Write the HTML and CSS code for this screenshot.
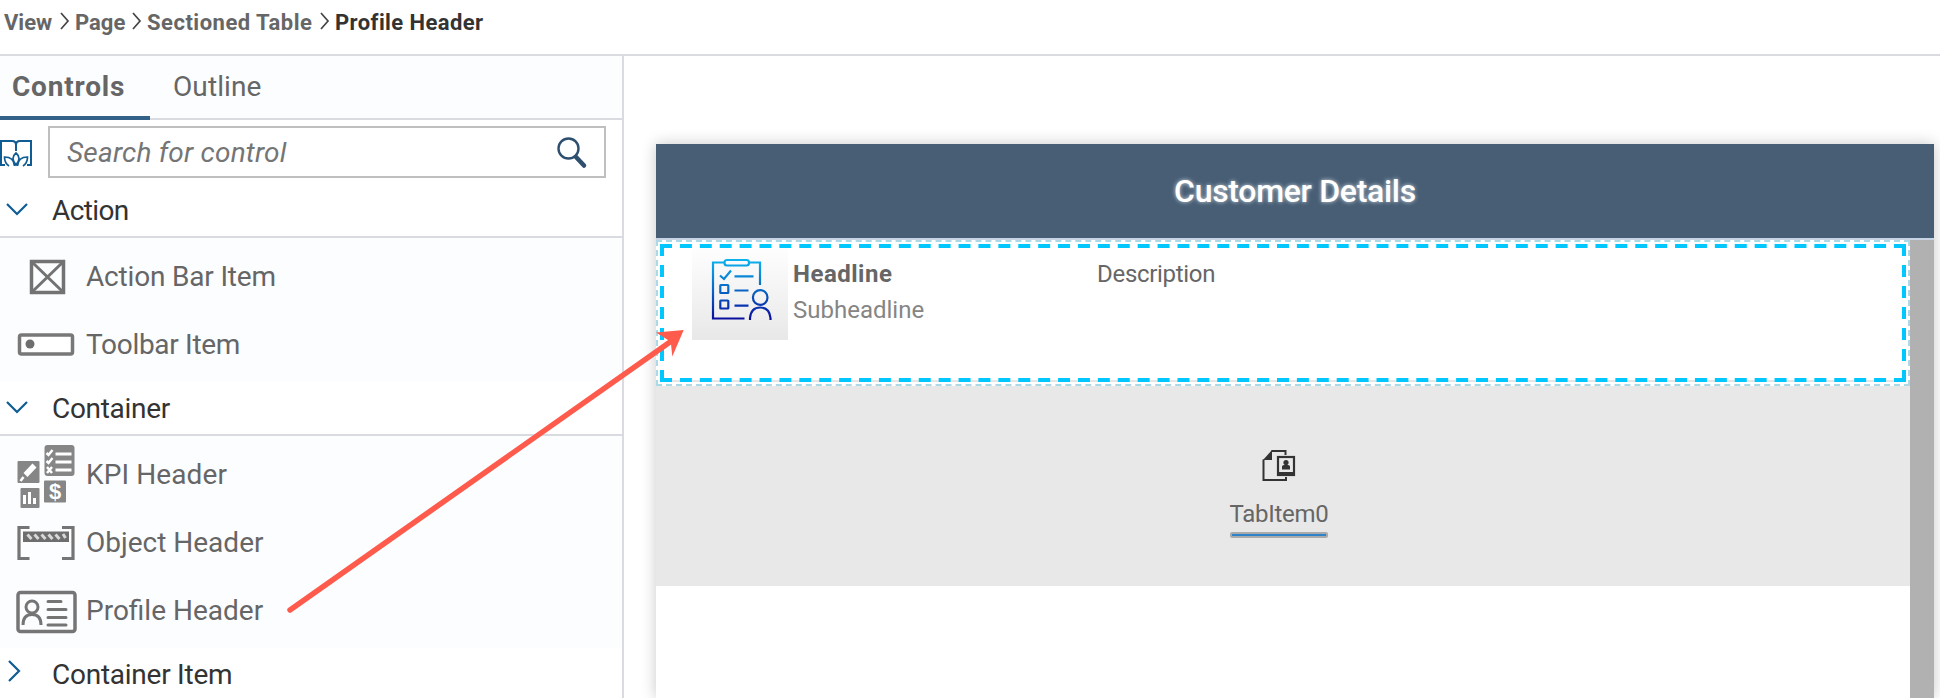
FILE: index.html
```html
<!DOCTYPE html>
<html lang="en">
<head>
<meta charset="utf-8">
<title>Page Designer</title>
<link rel="stylesheet" href="styles.css">
</head>
<body>
<nav class="crumbs">
  <span class="crumb c-view">View</span>
  <svg class="sep" width="12" height="18" viewBox="0 0 12 18"><path d="M2 1l7 8-7 8"/></svg>
  <span class="crumb c-page">Page</span>
  <svg class="sep" width="12" height="18" viewBox="0 0 12 18"><path d="M2 1l7 8-7 8"/></svg>
  <span class="crumb c-table">Sectioned Table</span>
  <svg class="sep" width="12" height="18" viewBox="0 0 12 18"><path d="M2 1l7 8-7 8"/></svg>
  <span class="crumb c-current">Profile Header</span>
</nav>
<main class="work">
  <aside class="side">
    <div class="tabs">
      <div class="tab active"><span>Controls</span></div>
      <div class="tab plain"><span>Outline</span></div>
    </div>
    <div class="search-row">
      <svg class="book" width="32" height="32" viewBox="0 0 32 32"><path d="M5 25H1V1h11q4 0 4 4q0-4 4-4h11v24h-4M16 5v6"/><path class="petal" d="M16 25Q10 18 16 13Q22 18 16 25zM14.500 26Q14 17 4.500 17Q4.500 23 9 26M17.500 26Q18 17 27.500 17Q27.500 23 23 26"/></svg>
      <div class="search">
        <span>Search for control</span>
        <svg width="32" height="36" viewBox="0 0 32 36"><circle cx="12.500" cy="13.500" r="10"/><path class="handle" d="M20 22l8 8.500"/></svg>
      </div>
    </div>
    <div class="section first"><svg width="22" height="14" viewBox="0 0 22 14"><path d="M1 2l10 10L21 2"/></svg><span class="s-action">Action</span></div>
    <div class="items">
      <div class="item">
        <svg width="64" height="68" viewBox="0 0 64 68"><g fill="none" stroke="#737373"><path stroke-width="3.500" d="M15.500 23.500h32v31h-32z"/><path stroke-width="3" d="M17 25l29 28M46 25L17 53"/></g></svg>
        <span class="t-abi">Action Bar Item</span>
      </div>
      <div class="item">
        <svg width="64" height="68" viewBox="0 0 64 68"><rect x="3.500" y="29" width="53" height="19" rx="2" fill="#fff" stroke="#787878" stroke-width="3.500"/><circle cx="14" cy="38" r="4.500" fill="#6e6e6e"/></svg>
        <span class="t-tbi">Toolbar Item</span>
      </div>
    </div>
    <div class="section second"><svg width="22" height="14" viewBox="0 0 22 14"><path d="M1 2l10 10L21 2"/></svg><span class="s-container">Container</span></div>
    <div class="items">
      <div class="item">
        <svg width="64" height="68" viewBox="0 0 64 68"><g transform="translate(-.5 1)"><g fill="#868686"><rect x="2" y="24" width="22" height="22" rx="1"/><rect x="29" y="8" width="30" height="31" rx="3"/><rect x="5" y="51" width="19" height="20" rx="1"/><rect x="28.500" y="43.500" width="22" height="22" rx="1"/></g><g fill="none" stroke="#fff"><path stroke-width="5.500" d="M19 28.500L10 38"/><path stroke-width="2.500" d="M8 40l-3 4M31 16l2 2 4-5M31 24l2 2 4-5M31.500 30l5 6M36.500 30l-5 6"/><path stroke-width="3" d="M40 17h16M40 25h16M40 33h16M9 58v9M14 55v12M19 61v6"/></g><text class="dollar" x="39.500" y="62">$</text></g></svg>
        <span class="t-kpi">KPI Header</span>
      </div>
      <div class="item">
        <svg width="64" height="68" viewBox="0 0 64 68"><path fill="none" stroke="#757575" stroke-width="3.200" d="M13.500 23.500H3v31h10.500M46 23.500h11v31H46"/><rect x="7" y="27.500" width="46" height="10.500" fill="#6e6e6e"/><path stroke="#d8d8d8" stroke-width="3" d="M11.500 30.500l4 4.500M18.500 30.500l4 4.500M25.500 30.500l4 4.500M32.500 30.500l4 4.500M39.500 30.500l4 4.500M47 30l2.500 4"/></svg>
        <span class="t-oh">Object Header</span>
      </div>
      <div class="item">
        <svg width="64" height="68" viewBox="0 0 64 68"><g fill="none" stroke="#757575" stroke-width="3"><rect x="2" y="20.500" width="57" height="39" rx="2.500" stroke-width="3.500"/><circle cx="16" cy="35" r="6"/><path d="M7 53q0-10.500 9-10.500t9 10.500"/><path stroke-linecap="round" d="M32 29.500h13M32 37.500h18M32 45.500h18M32 53h18"/></g></svg>
        <span class="t-ph">Profile Header</span>
      </div>
    </div>
    <div class="section third"><svg width="14" height="22" viewBox="0 0 14 22"><path d="M2 1l10 10L2 21"/></svg><span class="s-ci">Container Item</span></div>
  </aside>
  <section class="stage">
    <div class="device">
      <header class="bar"><span>Customer Details</span></header>
      <div class="body">
        <div class="content">
          <div class="profile">
            <svg class="frame" width="1246" height="138" viewBox="0 0 1246 138"><g fill="none" stroke="#00c8ff" stroke-width="4"><path stroke-dasharray="12 7.903" d="M0 2h1246M0 136h1246"/><path stroke-dasharray="12 9" d="M2 0v138M1244 0v138"/></g></svg>
            <div class="picture">
              <svg width="96" height="96" viewBox="0 0 96 96"><defs><linearGradient id="ink" gradientUnits="userSpaceOnUse" x1="0" y1="15" x2="0" y2="76"><stop offset="0" stop-color="#0cb4ee"/><stop offset=".5" stop-color="#0867c6"/><stop offset="1" stop-color="#0a0a9c"/></linearGradient></defs><g fill="none" stroke="url(#ink)" stroke-width="2.200"><path d="M32 18.500H21V74.500h31.500M57 18.500h11V41"/><rect x="32.500" y="16" width="24.500" height="5.500" rx="2.500"/><path d="M28 31.500l4 3.500 7-8.500M42.500 32.300h19M42.500 46.500h14M42.500 61.600h14"/><rect x="28.300" y="41" width="8" height="8" rx=".5"/><rect x="28.300" y="56.500" width="8" height="8" rx=".5"/><circle cx="68.200" cy="53.500" r="7.300"/><path d="M58 76v-2q1-10.500 10.200-10.500T78.500 74v2"/></g></svg>
            </div>
            <div class="names"><b>Headline</b><span>Subheadline</span></div>
            <div class="desc">Description</div>
          </div>
          <div class="tabstrip">
            <svg width="34" height="34" viewBox="0 0 34 34"><path d="M1.500 10.500V31H24v-3M9.500 2h14v4" fill="none" stroke="#333" stroke-width="2"/><path fill="#333" d="M1 11L10 1v10z"/><rect x="16" y="8" width="16" height="18" fill="#e8e8e8" stroke="#333" stroke-width="2.200"/><path fill="#333" d="M15 23h18v4H15zM20 20.500v-3q0-1.500 2-1.500h4q2 0 2 1.500v3z"/><circle cx="24" cy="13.500" r="2.600" fill="#333"/></svg>
            <span class="tabname">TabItem0</span>
            <i class="marker"></i>
          </div>
        </div>
        <div class="scroll"></div>
      </div>
    </div>
  </section>
</main>
<svg class="arrow" width="410" height="300" viewBox="0 0 410 300"><path d="M10 290L390 22" fill="none" stroke="#ff5b4d" stroke-width="5.500" stroke-linecap="round"/><path d="M403.700 10L392.300 36.500L391 24L388 20L376 12.500z" fill="#ff5b4d"/></svg>
</body>
</html>
```
FILE: styles.css
```css
* { box-sizing: border-box; }
body { margin: 0; width: 1940px; height: 698px; overflow: hidden; background: #fff; font-family: Roboto, "Noto Sans", sans-serif; font-size: 28px; color: #666; position: relative; }
svg { display: block; flex: none; overflow: visible; }
span, b { white-space: nowrap; }

.crumbs { display: flex; height: 56px; padding: 9px 0 0 4px; border-bottom: 2px solid #d9dbe0; font-size: 22px; font-weight: 700; line-height: 28px; }
.crumb { flex: none; }
.c-view { width: 55px; }
.c-page { width: 56px; }
.c-table { width: 172px; letter-spacing: .5px; }
.c-current { color: #333; letter-spacing: .42px; }
.sep { margin: 3px 4px 0 0; fill: none; stroke: #444; stroke-width: 1.7; }

.work { display: flex; height: 642px; overflow: hidden; }
.side { width: 624px; flex: none; border-right: 2px solid #d9dbe0; background: #fff; }
.tabs { display: flex; height: 64px; border-bottom: 2px solid #d9dbe0; background: #fcfdff; line-height: 62px; }
.tab { height: 64px; }
.active { width: 150px; padding-left: 12px; border-bottom: 4px solid #346187; font-weight: 700; letter-spacing: .8px; }
.plain { padding-left: 23px; letter-spacing: .1px; }

.search-row { display: flex; padding-top: 6px; height: 72px; }
.book { margin: 14px 16px 0 0; fill: none; stroke: #0f5c94; stroke-width: 2; }
.petal { stroke-width: 1.7; }
.search { display: flex; justify-content: space-between; width: 558px; height: 52px; padding: 0 16px 0 17px; border: 2px solid #bfbfbf; color: #757575; font-style: italic; line-height: 50px; letter-spacing: .2px; }
.search svg { margin-top: 7px; fill: none; stroke: #2f4f6f; stroke-width: 2.4; }
.search .handle { stroke-width: 4.500; stroke-linecap: round; }

.section { display: flex; align-items: flex-start; height: 46px; padding-left: 6px; border-bottom: 2px solid #d9dbe0; color: #333; line-height: 38px; }
.section svg { margin: 10px 24px 0 0; fill: none; stroke: #0f5c94; stroke-width: 2.2; }
.s-action { letter-spacing: -.6px; }
.s-container { letter-spacing: -.3px; }
.s-ci { letter-spacing: -.25px; }
.second { height: 54px; padding-top: 8px; }
.third { height: 54px; padding: 8px 0 0 7px; border: 0; }
.third svg { margin: 4px 31px 0 0; }
.items { background: #fcfdff; padding-bottom: 8px; }
.item { display: flex; gap: 6px; height: 68px; padding-left: 16px; line-height: 78px; }
.t-abi { letter-spacing: -.18px; }
.t-tbi { letter-spacing: -.3px; }
.t-kpi { letter-spacing: .1px; }
.dollar { fill: #fff; font: 700 22px "Liberation Sans", sans-serif; text-anchor: middle; }

.stage { width: 1316px; padding: 88px 0 0 32px; }
.device { width: 1278px; height: 554px; background: #fff; box-shadow: 0 0 14px rgba(0, 0, 0, .22); }
.bar { height: 96px; border-bottom: 2px solid #c8d3e3; background: #475e75; color: #fff; text-align: center; font-size: 32px; font-weight: 500; line-height: 94px; letter-spacing: -.3px; text-shadow: 0 0 4px rgba(255, 255, 255, .75); }
.body { display: flex; height: 458px; }
.content { width: 1254px; }
.scroll { width: 24px; background: #b1b1b1; }
.profile { position: relative; display: flex; height: 146px; padding: 2px 0 0 34px; border: 2px dashed #add8e6; font-size: 24px; }
.frame { position: absolute; left: 2px; top: 2px; background: linear-gradient(#e5e5e5, #e5e5e5) 0 136px / 100% 2px no-repeat; }
.picture { width: 96px; height: 96px; background: linear-gradient(#fff, #e8e8e8); }
.names { display: flex; flex-direction: column; width: 309px; padding: 12px 0 0 5px; line-height: 36px; }
.names b { letter-spacing: .5px; }
.names span { color: #858585; }
.desc { padding-top: 12px; line-height: 36px; letter-spacing: -.3px; }
.tabstrip { display: flex; flex-direction: column; align-items: center; height: 200px; padding: 63px 8px 0 0; background: #e8e8e8; font-size: 24px; }
.tabname { margin-top: 15px; line-height: 32px; letter-spacing: -.25px; }
.marker { width: 98px; height: 6px; margin-top: 2px; border: 2px solid #aaa; border-radius: 2px; background: #2f83ca; }
.arrow { position: absolute; left: 280px; top: 320px; pointer-events: none; }
```
